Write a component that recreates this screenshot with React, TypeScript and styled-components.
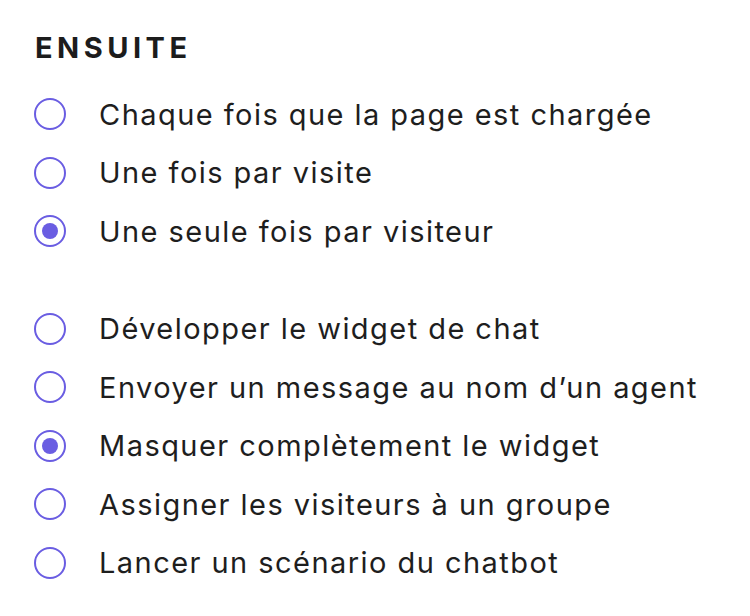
import React, { useState } from 'react'
import styled, { createGlobalStyle } from 'styled-components'

const GlobalStyle = createGlobalStyle`
  body {
    margin: 0;
    background: #ffffff;
    font-family: Inter, "Noto Sans", sans-serif;
  }
`

const Panel = styled.div`
  padding: 30px 0 0 34px;
  display: flex;
  flex-direction: column;
`

const Title = styled.h2`
  margin: 0 0 19px 1px;
  font-size: 29px;
  line-height: 36px;
  font-weight: 700;
  letter-spacing: 4.5px;
  color: #1c1c1c;
`

const Group = styled.div<{ spaced?: boolean }>`
  display: flex;
  flex-direction: column;
  margin-top: ${({ spaced }) => (spaced ? '39px' : '0')};
`

const Row = styled.label`
  display: flex;
  align-items: center;
  gap: 33px;
  height: 58.5px;
  cursor: pointer;
`

const Circle = styled.span<{ checked: boolean }>`
  width: 32px;
  height: 32px;
  box-sizing: border-box;
  border-radius: 50%;
  border: 2.3px solid #6a5de2;
  display: flex;
  align-items: center;
  justify-content: center;
  flex-shrink: 0;
  &::after {
    content: "";
    width: 16px;
    height: 16px;
    border-radius: 50%;
    background: #6a5de2;
    display: ${({ checked }) => (checked ? 'block' : 'none')};
  }
`

const Label = styled.span`
  font-size: 29px;
  letter-spacing: 1.45px;
  color: #1e1e1e;
`

const frequency = [
  'Chaque fois que la page est chargée',
  'Une fois par visite',
  'Une seule fois par visiteur',
]

const actions = [
  'Développer le widget de chat',
  'Envoyer un message au nom d’un agent',
  'Masquer complètement le widget',
  'Assigner les visiteurs à un groupe',
  'Lancer un scénario du chatbot',
]

const App = () => {
  const [freq, setFreq] = useState(2)
  const [action, setAction] = useState(2)

  return (
    <>
      <GlobalStyle />
      <Panel>
        <Title>ENSUITE</Title>
        <Group>
          {frequency.map((txt, i) => (
            <Row key={txt} onClick={() => setFreq(i)}>
              <Circle checked={freq === i} />
              <Label>{txt}</Label>
            </Row>
          ))}
        </Group>
        <Group spaced>
          {actions.map((txt, i) => (
            <Row key={txt} onClick={() => setAction(i)}>
              <Circle checked={action === i} />
              <Label>{txt}</Label>
            </Row>
          ))}
        </Group>
      </Panel>
    </>
  )
}

export default App
